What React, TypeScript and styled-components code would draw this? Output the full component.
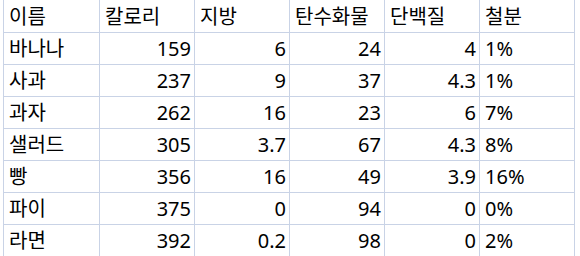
import React from "react";
import styled, { createGlobalStyle } from "styled-components";

const GlobalStyle = createGlobalStyle`
  html, body {
    margin: 0;
    padding: 0;
    background: #ffffff;
    overflow: hidden;
  }
`;

const LINE = "#c9d3e6";

const Sheet = styled.div`
  display: grid;
  grid-template-columns: 96px repeat(5, 95px);
  margin-left: 3px;
  border-left: 1px solid ${LINE};
  width: max-content;
  font-family: "Noto Sans", "Noto Sans CJK KR", sans-serif;
  font-size: 20px;
  color: #000;
`;

const Cell = styled.div<{ $header?: boolean; $align?: "left" | "right" }>`
  box-sizing: border-box;
  height: ${(p) => (p.$header ? 33 : 32)}px;
  border-right: 1px solid ${LINE};
  border-bottom: 1px solid ${LINE};
  display: flex;
  align-items: center;
  justify-content: ${(p) => (p.$align === "right" ? "flex-end" : "flex-start")};
  padding: ${(p) => (p.$align === "right" ? "1px 3px 0 0" : "1px 0 0 5px")};
  white-space: nowrap;
  line-height: 1;
`;

const headers = ["이름", "칼로리", "지방", "탄수화물", "단백질", "철분"];

const rows: [string, string, string, string, string, string][] = [
  ["바나나", "159", "6", "24", "4", "1%"],
  ["사과", "237", "9", "37", "4.3", "1%"],
  ["과자", "262", "16", "23", "6", "7%"],
  ["샐러드", "305", "3.7", "67", "4.3", "8%"],
  ["빵", "356", "16", "49", "3.9", "16%"],
  ["파이", "375", "0", "94", "0", "0%"],
  ["라면", "392", "0.2", "98", "0", "2%"],
];

export default function App() {
  return (
    <>
      <GlobalStyle />
      <Sheet>
        {headers.map((h) => (
          <Cell key={h} $header>
            {h}
          </Cell>
        ))}
        {rows.map((r) => (
          <React.Fragment key={r[0]}>
            <Cell>{r[0]}</Cell>
            <Cell $align="right">{r[1]}</Cell>
            <Cell $align="right">{r[2]}</Cell>
            <Cell $align="right">{r[3]}</Cell>
            <Cell $align="right">{r[4]}</Cell>
            <Cell>{r[5]}</Cell>
          </React.Fragment>
        ))}
      </Sheet>
    </>
  );
}
